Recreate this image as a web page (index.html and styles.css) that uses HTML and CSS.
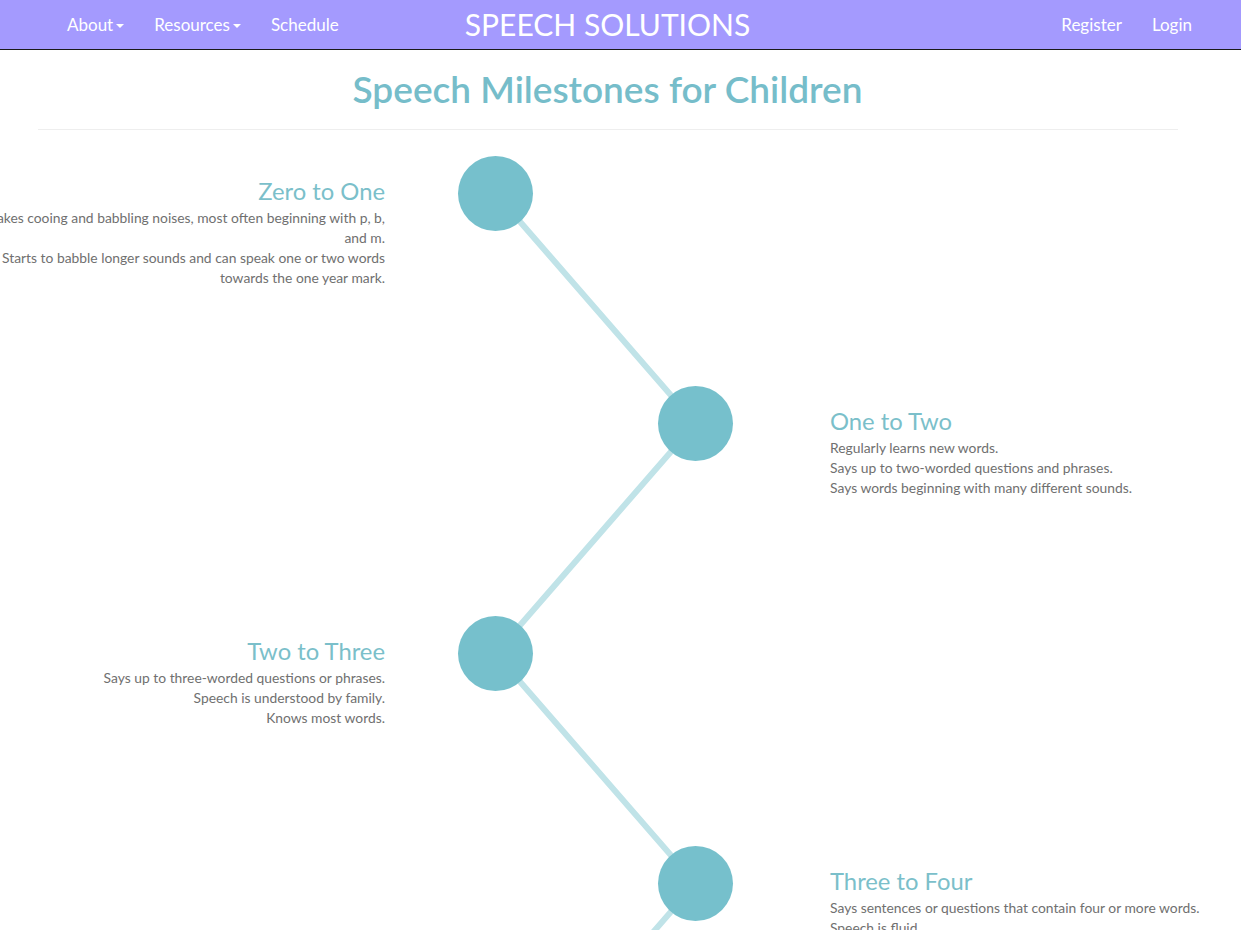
FILE: index.html
```html
<!DOCTYPE html>
<html lang="en">
<head>
<meta charset="utf-8">
<title>Speech Solutions - Speech Milestones for Children</title>
<link rel="stylesheet" href="styles.css">
</head>
<body>
<nav class="navbar">
  <div class="navbar-inner">
    <ul class="nav nav-left">
      <li><a href="#">About<span class="caret"></span></a></li>
      <li><a href="#">Resources<span class="caret"></span></a></li>
      <li><a href="#">Schedule</a></li>
    </ul>
    <a class="brand" href="#">SPEECH SOLUTIONS</a>
    <ul class="nav nav-right">
      <li><a href="#">Register</a></li>
      <li><a href="#">Login</a></li>
    </ul>
  </div>
</nav>

<div class="page">
  <main class="container">
    <h1 class="page-title">Speech Milestones for Children</h1>
    <hr class="rule">
  </main>

  <section class="timeline">
    <svg class="track" width="275" height="1150" viewBox="0 0 275 1150" aria-hidden="true">
      <polyline points="37.5,37.5 237.5,267.5 37.5,497.5 237.5,727.5 37.5,957.5" fill="none" stroke="#c0e3e8" stroke-width="6"/>
    </svg>

    <div class="entry left r1">
      <h3>Zero to One</h3>
      <p>Makes cooing and babbling noises, most often beginning with p, b, and m.</p>
      <p>Starts to babble longer sounds and can speak one or two words towards the one year mark.</p>
    </div>
    <div class="node at-left r1"></div>

    <div class="node at-right r2"></div>
    <div class="entry right r2">
      <h3>One to Two</h3>
      <p>Regularly learns new words.</p>
      <p>Says up to two-worded questions and phrases.</p>
      <p>Says words beginning with many different sounds.</p>
    </div>

    <div class="entry left r3">
      <h3>Two to Three</h3>
      <p>Says up to three-worded questions or phrases.</p>
      <p>Speech is understood by family.</p>
      <p>Knows most words.</p>
    </div>
    <div class="node at-left r3"></div>

    <div class="node at-right r4"></div>
    <div class="entry right r4">
      <h3>Three to Four</h3>
      <p>Says sentences or questions that contain four or more words.</p>
      <p>Speech is fluid.</p>
    </div>

    <div class="entry left r5">
      <h3>Four to Five</h3>
      <p>Speech is understood by most people.</p>
      <p>Tells simple stories.</p>
    </div>
    <div class="node at-left r5"></div>
  </section>
</div>
</body>
</html>
```

FILE: styles.css
```css
* { box-sizing: border-box; }

html, body {
  margin: 0;
  padding: 0;
  background: #fff;
}

body {
  font-family: Lato, "Open Sans", "Liberation Sans", sans-serif;
  color: #6e6e6e;
  overflow-x: hidden;
}

.page {
  width: 1215px;
}

/* ---------- navbar ---------- */
.navbar {
  height: 50px;
  background: #a49afe;
  border-bottom: 1px solid #1a1a1a;
}

.navbar-inner {
  width: 1215px;
  height: 49px;
  display: grid;
  grid-template-columns: 1fr auto 1fr;
  align-items: center;
}

.nav {
  list-style: none;
  margin: 0;
  padding: 0;
  display: flex;
}

.nav-left { padding-left: 52px; }
.nav-right { justify-content: flex-end; padding-right: 8px; }

.nav a {
  display: flex;
  align-items: center;
  padding: 0 15px;
  height: 49px;
  color: #fff;
  text-decoration: none;
  font-size: 17px;
}

.caret {
  display: inline-block;
  width: 0;
  height: 0;
  margin-left: 3px;
  margin-top: 2px;
  border-top: 4px solid #fff;
  border-left: 4px solid transparent;
  border-right: 4px solid transparent;
}

.brand {
  color: #fff;
  text-decoration: none;
  font-size: 30px;
  line-height: 49px;
  height: 49px;
}

/* ---------- heading ---------- */
.container {
  width: 1140px;
  margin: 0 auto;
}

.page-title {
  margin: 16px 0 0;
  text-align: center;
  font-size: 37px;
  font-weight: 600;
  line-height: 45px;
  color: #76bdca;
}

.rule {
  margin: 18px 0 0;
  border: 0;
  border-top: 1px solid #eeeeee;
}

/* ---------- timeline ---------- */
.timeline {
  margin: 26px 0 0 -30px;
  display: grid;
  grid-template-columns: 415px 73px 275px 97px 400px;
  grid-template-rows: repeat(5, 230px);
}

.track {
  grid-column: 3;
  grid-row: 1 / 6;
  z-index: 0;
}

.node {
  grid-column: 3;
  width: 75px;
  height: 75px;
  border-radius: 50%;
  background: #76c0cc;
  z-index: 1;
}

.node.at-left { justify-self: start; }
.node.at-right { justify-self: end; }

.r1 { grid-row: 1; }
.r2 { grid-row: 2; }
.r3 { grid-row: 3; }
.r4 { grid-row: 4; }
.r5 { grid-row: 5; }

.entry { padding-top: 22px; }
.entry.left { grid-column: 1; text-align: right; }
.entry.right { grid-column: 5; text-align: left; }

.entry h3 {
  margin: 0 0 4px;
  font-size: 23.8px;
  font-weight: 400;
  line-height: 26px;
  color: #7bbfca;
}

.entry p {
  margin: 0;
  font-size: 13.85px;
  line-height: 20px;
  color: #707070;
}
```
